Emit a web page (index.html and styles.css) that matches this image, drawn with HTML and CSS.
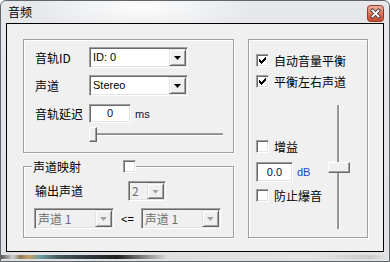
FILE: index.html
```html
<!DOCTYPE html>
<html lang="zh-CN">
<head>
    <meta charset="UTF-8">
    <title>音频</title>
    <link rel="stylesheet" href="styles.css">
</head>
<body>
    <div class="window">
        <div class="titlebar">
            <span class="title">音频</span>
            <span class="close">
                <svg width="17" height="17" viewBox="0 0 17 17">
                    <defs>
                        <linearGradient id="cg" x1="0" y1="0" x2="0" y2="1">
                            <stop offset="0" stop-color="#eeb3a2"/>
                            <stop offset="0.5" stop-color="#d9765f"/>
                            <stop offset="1" stop-color="#c7432b"/>
                        </linearGradient>
                    </defs>
                    <rect x="0.5" y="0.5" width="16" height="16" rx="3" fill="url(#cg)" stroke="#8e3b2c"/>
                    <path d="M5.5 5.5l6 6M11.5 5.5l-6 6" stroke="#4a3a38" stroke-width="3.6" stroke-linecap="square"/>
                    <path d="M5.5 5.5l6 6M11.5 5.5l-6 6" stroke="#fff" stroke-width="1.8" stroke-linecap="square"/>
                </svg>
            </span>
        </div>

        <div class="client">
            <div class="cols">
                <div class="left">
                    <div class="group track">
                        <div class="row">
                            <span class="lbl">音轨ID</span>
                            <div class="combo wide"><span class="val">ID: 0</span><span class="drop"></span></div>
                        </div>
                        <div class="row gap7">
                            <span class="lbl">声道</span>
                            <div class="combo wide"><span class="val">Stereo</span><span class="drop"></span></div>
                        </div>
                        <div class="row gap8">
                            <span class="lbl">音轨延迟</span>
                            <div class="edit delay">0</div>
                            <span class="unit">ms</span>
                        </div>
                        <div class="hslider"><span class="hthumb"></span></div>
                    </div>

                    <div class="group map">
                        <div class="legend">
                            <span>声道映射</span>
                            <span class="check legend-check"></span>
                        </div>
                        <div class="row out">
                            <span class="lbl long">输出声道</span>
                            <div class="combo off small"><span class="val">2</span><span class="drop"></span></div>
                        </div>
                        <div class="row gap7 pair">
                            <div class="combo off chan"><span class="val">声道 1</span><span class="drop"></span></div>
                            <span class="arrow">&lt;=</span>
                            <div class="combo off chan"><span class="val">声道 1</span><span class="drop"></span></div>
                        </div>
                    </div>
                </div>

                <div class="group right">
                    <label class="opt"><span class="check on"><svg width="7" height="7" viewBox="0 0 7 7" shape-rendering="crispEdges"><path d="M0 2h1v1h1v1h1v-1h1v-1h1v-1h1v-1h1v3h-1v1h-1v1h-1v1h-1v1h-1v-1h-1v-1h-1z"/></svg></span>自动音量平衡</label>
                    <label class="opt second"><span class="check on"><svg width="7" height="7" viewBox="0 0 7 7" shape-rendering="crispEdges"><path d="M0 2h1v1h1v1h1v-1h1v-1h1v-1h1v-1h1v3h-1v1h-1v1h-1v1h-1v1h-1v-1h-1v-1h-1z"/></svg></span>平衡左右声道</label>
                    <div class="gain">
                        <div class="gain-controls">
                            <label class="opt"><span class="check"></span>增益</label>
                            <div class="row db-row">
                                <div class="edit db">0.0</div>
                                <span class="unit blue">dB</span>
                            </div>
                            <label class="opt clip"><span class="check"></span>防止爆音</label>
                        </div>
                        <div class="vslider"><span class="vthumb"></span></div>
                    </div>
                </div>
            </div>
        </div>
    </div>
</body>
</html>
```

FILE: styles.css
```css
*{
    margin: 0;
    padding: 0;
    box-sizing: border-box;
}

body{
    background: #fff;
    font-family: "Noto Sans CJK SC", sans-serif;
    font-size: 12px;
    color: #000;
}

.window{
    width: 390px;
    height: 262px;
    border: 1px solid #5f666b;
    border-radius: 6px 6px 0 0;
    padding: 0 5px 9px;
    display: flex;
    flex-direction: column;
    background:
        linear-gradient(to right, #5a5a5a 0, #cfcfcf 3%, #8c7a58 5%, #c6a062 7%, #6c9c9c 10%, #44545a 15%, #1e1e1e 30%, #dedede 43%, #e6e6e6 80%, #c9c9c9 95%, #e6e6e6 100%) left bottom 2px / 100% 4px no-repeat,
        radial-gradient(ellipse 110px 26px at 140px 6px, #fdfdfd, rgba(255,255,255,0) 100%),
        linear-gradient(#e6e8eb, #dfe1e4);
}

.titlebar{
    height: 22px;
    display: flex;
    align-items: center;
    justify-content: space-between;
    padding-left: 2px;
}

.title{
    font-size: 12px;
    line-height: 14px;
}

.close{
    align-self: flex-start;
    margin-top: 4px;
    height: 17px;
}

.close svg{
    display: block;
}

.client{
    flex: 1;
    border: 1px solid #000;
    background: #f0f0f0;
    padding: 15px 15px 0 16px;
}

.cols{
    display: flex;
    gap: 14px;
}

.left{
    width: 211px;
    display: flex;
    flex-direction: column;
}

.group{
    border: 1px solid #a0a0a0;
    box-shadow: inset 1px 1px 0 #fff, 1px 1px 0 #fff;
}

.track{
    padding: 7px 0 10px 11px;
}

.row{
    display: flex;
    align-items: center;
}

.gap7{
    margin-top: 7px;
}

.gap8{
    margin-top: 8px;
}

.lbl{
    width: 54px;
    line-height: 14px;
}

.lbl.long{
    width: 93px;
}

/* combo: 2px sunken edge, drop button sits right inside it */
.combo{
    display: flex;
    align-items: stretch;
    height: 21px;
    padding: 1px;
    background: #fff;
    border: 1px solid;
    border-color: #a0a0a0 #fff #fff #a0a0a0;
    box-shadow: inset 1px 1px 0 #696969, inset -1px -1px 0 #e3e3e3;
}

.combo .val{
    flex: 1;
    padding-left: 2px;
    font-family: "Liberation Sans", "Noto Sans CJK SC", sans-serif;
    font-size: 11px;
    line-height: 17px;
    white-space: nowrap;
}

.drop{
    width: 17px;
    background: #f0f0f0;
    border: 1px solid;
    border-color: #e3e3e3 #696969 #696969 #e3e3e3;
    box-shadow: inset 1px 1px 0 #fff, inset -1px -1px 0 #a0a0a0;
    display: flex;
    align-items: center;
    justify-content: center;
}

.drop::after{
    content: "";
    width: 7px;
    height: 4px;
    margin-top: 1px;
    background: #000;
    clip-path: polygon(0 0, 100% 0, 50% 100%);
}

.wide{
    width: 99px;
}

.off{
    background: #f0f0f0;
}

.off .val{
    color: #6d6d6d;
    font-family: "Noto Sans CJK SC", sans-serif;
    font-size: 12px;
}

.off .drop::after{
    background: #a0a0a0;
}

.small{
    width: 38px;
    height: 20px;
}

.small .val{
    line-height: 16px;
}

.chan{
    width: 80px;
}

.edit{
    height: 19px;
    background: #fff;
    border: 1px solid;
    border-color: #a0a0a0 #fff #fff #a0a0a0;
    box-shadow: inset 1px 1px 0 #696969, inset -1px -1px 0 #e3e3e3;
    text-align: center;
    font-family: "Liberation Sans", sans-serif;
    font-size: 11px;
    line-height: 17px;
    color: #0a0a3a;
}

.delay{
    width: 42px;
}

.unit{
    margin-left: 4px;
    font-family: "Liberation Sans", sans-serif;
    font-size: 11px;
    color: #101030;
}

.unit.blue{
    color: #1c3fc4;
}

.hslider{
    margin-top: 4px;
    margin-left: 54px;
    width: 134px;
    height: 15px;
    display: flex;
    align-items: center;
    background: linear-gradient(#a0a0a0 0 1px, #8c8c8c 1px 2px, #fff 2px 3px) 0 6px / 100% 3px no-repeat;
}

.hthumb{
    width: 8px;
    height: 15px;
    background: #f0f0f0;
    border: 1px solid;
    border-color: #fff #696969 #696969 #fff;
    box-shadow: inset -1px -1px 0 #a0a0a0;
}

.map{
    margin-top: 13px;
    padding: 0 0 8px 11px;
}

.legend{
    display: flex;
    align-items: center;
    width: max-content;
    margin: -7px 0 0 -3px;
    padding-left: 1px;
    height: 13px;
    line-height: 13px;
    background: #f0f0f0;
}

.check{
    width: 13px;
    height: 13px;
    background: #fff;
    border: 1px solid;
    border-color: #a0a0a0 #fff #fff #a0a0a0;
    box-shadow: inset 1px 1px 0 #696969, inset -1px -1px 0 #e3e3e3;
    display: flex;
    align-items: center;
    justify-content: center;
    flex-shrink: 0;
}

.legend-check{
    margin-left: 42px;
}

.out{
    margin-top: 8px;
}

.pair{
    margin-left: -1px;
}

.arrow{
    margin: 0 7px;
    font-family: "Liberation Sans", sans-serif;
    font-size: 11px;
}

.right{
    width: 120px;
    padding: 14px 0 0 7px;
}

.opt{
    display: flex;
    align-items: center;
    gap: 5px;
    height: 13px;
    line-height: 13px;
}

.opt.second{
    margin-top: 8px;
}

.gain{
    margin-top: 17px;
    display: flex;
}

.gain-controls{
    width: 72px;
    padding-top: 35px;
}

.db-row{
    margin-top: 9px;
}

.db{
    width: 37px;
    height: 20px;
    line-height: 18px;
}

.opt.clip{
    margin-top: 7px;
}

.vslider{
    width: 22px;
    height: 124px;
    display: flex;
    align-items: center;
    background: linear-gradient(to right, #a0a0a0 0 1px, #8c8c8c 1px 2px, #fff 2px 3px) 9px 0 / 3px 100% no-repeat;
}

.vthumb{
    width: 22px;
    height: 11px;
    margin-top: 1px;
    background: #f0f0f0;
    border: 1px solid;
    border-color: #fff #696969 #696969 #fff;
    box-shadow: inset -1px -1px 0 #a0a0a0;
}
```
